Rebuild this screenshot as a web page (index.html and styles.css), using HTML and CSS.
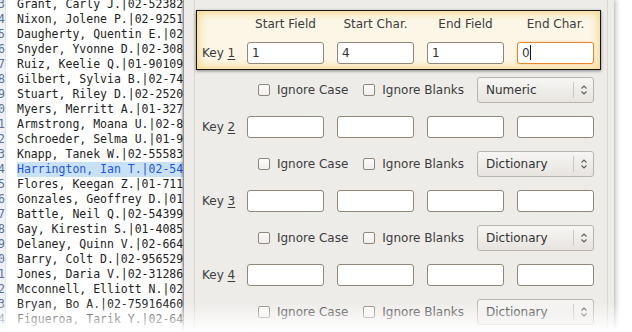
FILE: index.html
```html
<!DOCTYPE html>
<html lang="en">
<head>
  <meta charset="UTF-8" />
  <title>Sort Keys</title>
  <link rel="stylesheet" href="styles.css">
</head>
<body>
  <div class="screen">
    <div class="list">
      <div class="gutter">
        <div><span>13</span></div><div><span>14</span></div><div><span>15</span></div><div><span>16</span></div>
        <div><span>17</span></div><div><span>18</span></div><div><span>19</span></div><div><span>20</span></div>
        <div><span>21</span></div><div><span>22</span></div><div><span>23</span></div><div><span>24</span></div>
        <div><span>25</span></div><div><span>26</span></div><div><span>27</span></div><div><span>28</span></div>
        <div><span>29</span></div><div><span>30</span></div><div><span>31</span></div><div><span>32</span></div>
        <div><span>33</span></div><div><span>34</span></div>
      </div>
      <div class="lines">
        <div>Grant, Carly J.|02-5238214</div>
        <div>Nixon, Jolene P.|02-9251403</div>
        <div>Daugherty, Quentin E.|02-4417</div>
        <div>Snyder, Yvonne D.|02-3085521</div>
        <div>Ruiz, Keelie Q.|01-9010937</div>
        <div>Gilbert, Sylvia B.|02-7462</div>
        <div>Stuart, Riley D.|02-2520718</div>
        <div>Myers, Merritt A.|01-327560</div>
        <div>Armstrong, Moana U.|02-8816</div>
        <div>Schroeder, Selma U.|01-9403</div>
        <div>Knapp, Tanek W.|02-5558391</div>
        <div class="sel">Harrington, Ian T.|02-54</div>
        <div>Flores, Keegan Z.|01-711042</div>
        <div>Gonzales, Geoffrey D.|01-52</div>
        <div>Battle, Neil Q.|02-5439917</div>
        <div>Gay, Kirestin S.|01-4085276</div>
        <div>Delaney, Quinn V.|02-664108</div>
        <div>Barry, Colt D.|02-95652901</div>
        <div>Jones, Daria V.|02-3128654</div>
        <div>Mcconnell, Elliott N.|02-77</div>
        <div>Bryan, Bo A.|02-75916460</div>
        <div>Figueroa, Tarik Y.|02-6403</div>
      </div>
    </div>

    <div class="dialog">
      <div class="group">
        <div class="key active">
          <div class="row head">
            <span class="key-label"></span>
            <span class="col">Start Field</span>
            <span class="col">Start Char.</span>
            <span class="col">End Field</span>
            <span class="col">End Char.</span>
          </div>
          <div class="row">
            <span class="key-label">Key <u>1</u></span>
            <div class="col field">1</div>
            <div class="col field">4</div>
            <div class="col field">1</div>
            <div class="col field focus">0<span class="caret"></span></div>
          </div>
        </div>
        <div class="opts">
          <label class="check"><span class="box"></span>Ignore Case</label>
          <label class="check"><span class="box"></span>Ignore Blanks</label>
          <div class="select"><span class="value">Numeric</span><span class="arrows"><svg width="8" height="14" viewBox="0 0 8 14"><path d="M1.5 5.5L4 3L6.5 5.5M1.5 8.5L4 11L6.5 8.5" fill="none" stroke="#5e5c58" stroke-width="1.1"/></svg></span></div>
        </div>

        <div class="key">
          <div class="row">
            <span class="key-label">Key <u>2</u></span>
            <div class="col field"></div>
            <div class="col field"></div>
            <div class="col field"></div>
            <div class="col field"></div>
          </div>
        </div>
        <div class="opts">
          <label class="check"><span class="box"></span>Ignore Case</label>
          <label class="check"><span class="box"></span>Ignore Blanks</label>
          <div class="select"><span class="value">Dictionary</span><span class="arrows"><svg width="8" height="14" viewBox="0 0 8 14"><path d="M1.5 5.5L4 3L6.5 5.5M1.5 8.5L4 11L6.5 8.5" fill="none" stroke="#5e5c58" stroke-width="1.1"/></svg></span></div>
        </div>

        <div class="key">
          <div class="row">
            <span class="key-label">Key <u>3</u></span>
            <div class="col field"></div>
            <div class="col field"></div>
            <div class="col field"></div>
            <div class="col field"></div>
          </div>
        </div>
        <div class="opts">
          <label class="check"><span class="box"></span>Ignore Case</label>
          <label class="check"><span class="box"></span>Ignore Blanks</label>
          <div class="select"><span class="value">Dictionary</span><span class="arrows"><svg width="8" height="14" viewBox="0 0 8 14"><path d="M1.5 5.5L4 3L6.5 5.5M1.5 8.5L4 11L6.5 8.5" fill="none" stroke="#5e5c58" stroke-width="1.1"/></svg></span></div>
        </div>

        <div class="key">
          <div class="row">
            <span class="key-label">Key <u>4</u></span>
            <div class="col field"></div>
            <div class="col field"></div>
            <div class="col field"></div>
            <div class="col field"></div>
          </div>
        </div>
        <div class="opts">
          <label class="check"><span class="box"></span>Ignore Case</label>
          <label class="check"><span class="box"></span>Ignore Blanks</label>
          <div class="select"><span class="value">Dictionary</span><span class="arrows"><svg width="8" height="14" viewBox="0 0 8 14"><path d="M1.5 5.5L4 3L6.5 5.5M1.5 8.5L4 11L6.5 8.5" fill="none" stroke="#5e5c58" stroke-width="1.1"/></svg></span></div>
        </div>
      </div>
    </div>
  </div>
  <div class="fade"></div>
</body>
</html>
```

FILE: styles.css
```css
body {
  margin: 0;
  width: 632px;
  height: 332px;
  overflow: hidden;
  position: relative;
  background-color: #fff;
  font-family: "DejaVu Sans", sans-serif;
  font-size: 12px;
  color: #3c3c3c;
}
.screen {
  display: flex;
  height: 332px;
}
.list {
  width: 183px;
  flex: none;
  display: flex;
  overflow: hidden;
  background-color: #fff;
  font-family: "DejaVu Sans Mono", monospace;
  font-size: 11.5px;
  line-height: 15px;
  color: #222;
}
.gutter {
  width: 5px;
  flex: none;
  margin-top: -3px;
  overflow: hidden;
  background-color: #eef0f3;
  border-right: 1px solid #dfe5ee;
  color: #5f7194;
}
.gutter div {
  display: flex;
  justify-content: flex-end;
  white-space: nowrap;
}
.lines {
  flex: 1;
  margin-top: -3px;
  padding-left: 11px;
  white-space: nowrap;
  overflow: hidden;
}
.lines .sel {
  background-color: #c9e1f7;
  color: #1f55dc;
}
.dialog {
  width: 431px;
  flex: none;
  box-sizing: border-box;
  padding: 0 6px 0 10px;
  background-color: #eeece9;
  border-left: 1px solid #9a968f;
  box-shadow: -1px 0 2px rgba(0,0,0,0.3), 2px 0 5px rgba(0,0,0,0.25);
}
.group {
  height: 100%;
  box-sizing: border-box;
  padding: 10px 6px 0 1px;
  border-left: 1px solid #dad6d0;
  border-right: 1px solid #dad6d0;
}
.key {
  border: 1px solid transparent;
  padding: 6px 6px 5px 5px;
}
.key.active {
  border-color: #151515;
  background-color: #fcf6e7;
  box-shadow: inset 0 0 9px 2px #f6d789, 0 1px 3px rgba(0,0,0,0.45);
}
.row {
  display: flex;
  align-items: center;
}
.key-label {
  width: 45px;
  flex: none;
  white-space: nowrap;
}
.key-label u {
  text-underline-offset: 2px;
}
.col {
  width: 77px;
  flex: none;
}
.col + .col {
  margin-left: 13px;
}
.head {
  margin-bottom: 10px;
  line-height: 15px;
  text-align: center;
}
.field {
  height: 22px;
  box-sizing: border-box;
  padding: 0 4px;
  line-height: 20px;
  background-color: #fff;
  border: 1px solid #938779;
  border-radius: 3px;
  color: #333;
}
.field.focus {
  border-color: #e0862c;
  box-shadow: 0 0 2px rgba(240,150,50,0.5);
}
.caret {
  display: inline-block;
  width: 1px;
  height: 15px;
  background-color: #111;
  vertical-align: -3px;
}
.opts {
  display: flex;
  justify-content: flex-end;
  align-items: center;
  margin: 7px 7px 6px 6px;
}
.check {
  display: flex;
  align-items: center;
  gap: 7px;
  margin-right: 15px;
}
.check + .check {
  margin-right: 13px;
}
.box {
  width: 12px;
  height: 12px;
  box-sizing: border-box;
  border: 1px solid #8f877c;
  border-radius: 2px;
  background: linear-gradient(#fdfdfc, #f0eeeb);
}
.select {
  width: 117px;
  height: 26px;
  box-sizing: border-box;
  display: flex;
  align-items: center;
  padding-left: 8px;
  border: 1px solid #bab4ac;
  border-radius: 3px;
  background: linear-gradient(#f7f6f4, #e7e4e0);
  color: #333;
}
.select .value {
  flex: 1;
}
.select .arrows {
  width: 19px;
  height: 16px;
  display: flex;
  align-items: center;
  justify-content: center;
  border-left: 1px solid #ccc7c0;
}
.fade {
  position: absolute;
  left: 0;
  right: 0;
  bottom: 0;
  height: 30px;
  pointer-events: none;
  background: linear-gradient(rgba(255,255,255,0), rgba(255,255,255,0.6) 60%, #fff);
}
```
